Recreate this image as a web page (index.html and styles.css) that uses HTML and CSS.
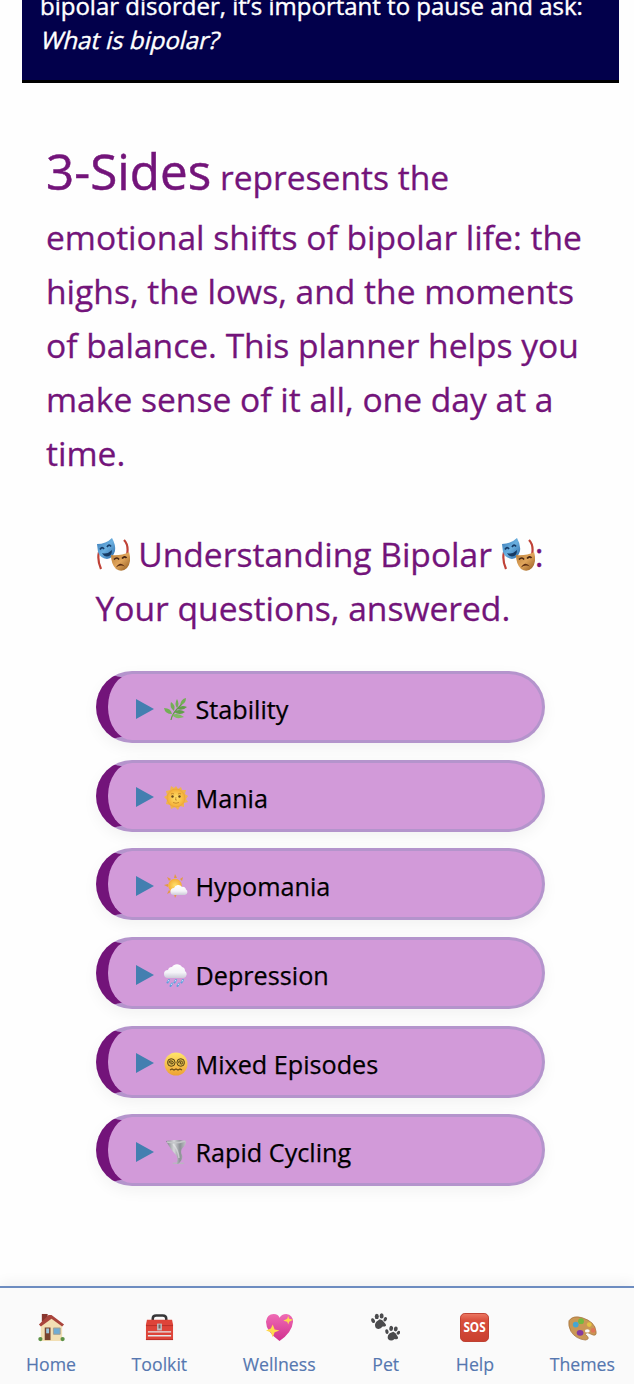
FILE: index.html
```
<!DOCTYPE html>
<html lang="en">
<head>
<meta charset="utf-8">
<title>3-Sides</title>
<link rel="stylesheet" href="styles.css">
</head>
<body>
<svg class="defs" aria-hidden="true">
  <defs>
    <linearGradient id="blue" x1="0" y1="0" x2="1" y2="1"><stop offset="0" stop-color="#3576b4"/><stop offset=".5" stop-color="#6bb0e0"/><stop offset="1" stop-color="#2865a3"/></linearGradient>
    <linearGradient id="gold" x1="0" y1="0" x2="1" y2="1"><stop offset="0" stop-color="#b87b36"/><stop offset=".5" stop-color="#e0a55b"/><stop offset="1" stop-color="#8f571c"/></linearGradient>
    <radialGradient id="sun"><stop offset="0" stop-color="#ffe16b"/><stop offset="1" stop-color="#f4ad35"/></radialGradient>
    <linearGradient id="cloud" x1="0" y1="0" x2="0" y2="1"><stop offset="0" stop-color="#fff"/><stop offset=".6" stop-color="#f4f3f8"/><stop offset="1" stop-color="#cccbd8"/></linearGradient>
    <linearGradient id="face" x1="0" y1="0" x2="0" y2="1"><stop offset="0" stop-color="#ffe56a"/><stop offset="1" stop-color="#eda233"/></linearGradient>
    <linearGradient id="wind" x1="0" y1="0" x2="1" y2="0"><stop offset="0" stop-color="#777b80"/><stop offset=".4" stop-color="#d5d7da"/><stop offset=".7" stop-color="#8c9095"/><stop offset="1" stop-color="#c3c5c9"/></linearGradient>
    <linearGradient id="pink" x1="0" y1="0" x2="0" y2="1"><stop offset="0" stop-color="#ef6bb4"/><stop offset="1" stop-color="#d0308f"/></linearGradient>
    <linearGradient id="red" x1="0" y1="0" x2="0" y2="1"><stop offset="0" stop-color="#ec7862"/><stop offset=".25" stop-color="#d94f3d"/><stop offset="1" stop-color="#c9402f"/></linearGradient>
    <symbol id="masks" viewBox="0 0 34 34">
      <path d="M3 14Q1 22 5 31M28 2Q33 7 31 17" fill="none" stroke="#c04237" stroke-width="2.200"/>
      <path d="M1 6Q10 6 16 0Q20 7 19 13Q17 20 11 21Q4 20 2 14Z" fill="url(#blue)"/>
      <path d="M4 11.500q2-3.500 4-.5M11 9q2-3.500 4-.5" fill="none" stroke="#153b68" stroke-width="1.700"/>
      <path d="M6 15q5 2 10-3q0 6-5 6.500q-3 0-5-3.500" fill="#163a63"/>
      <path d="M15 17Q25 18 33 14Q36 24 31 30Q26 35 20 31Q15 26 15 17Z" fill="url(#gold)"/>
      <path d="M18 21.500q3-3 5 0M26 20.500q3-3 4.500-.5" fill="none" stroke="#442311" stroke-width="1.700"/>
      <path d="M20 29.500q4-7 9-1q-5-2.500-9 1" fill="#5b2d12"/>
    </symbol>
  </defs>
</svg>
<main class="page">
  <section class="intro">
    <p class="intro-text">bipolar disorder, it’s important to pause and ask:<br><em class="question">What is bipolar?</em></p>
  </section>
  <p class="lead"><span class="brand">3-Sides</span> represents the<br>emotional shifts of bipolar life: the<br>highs, the lows, and the moments<br>of balance. This planner helps you<br>make sense of it all, one day at a<br>time.</p>
  <section class="topics">
    <h2 class="topics-title"><svg class="mask"><use href="#masks"/></svg> Understanding Bipolar <svg class="mask"><use href="#masks"/></svg>:<br>Your questions, answered.</h2>
    <div class="topic-list">
      <div class="topic"><i class="arrow"></i><svg class="emoji" viewBox="0 0 24 24"><path d="M7 23Q8 16 18 7" fill="none" stroke="#5f9a48" stroke-width="1.200"/><g fill="#73ae55"><path d="M8 17Q1 17 0 11Q7 11 8 17M10 14Q5 10 7 5Q12 8 10 14M13 11Q10 7 13 2Q16 7 13 11M16 8Q17 2 22 1Q22 7 16 8"/><path d="M13 12Q17 7 23 10Q19 14 13 12M10 15Q15 11 21 15Q16 19 10 15" fill="#629f4a"/><path d="M8 18Q14 15 20 20Q12 23 8 18" fill="#81b962"/></g></svg><span>Stability</span></div>
      <div class="topic"><i class="arrow"></i><svg class="emoji" viewBox="0 0 24 24"><path d="M12 0l2 3 3-2 1 3 4 0-1 4 3 2-2 3 2 3-4 1 0 4-4-1-2 4-3-3-4 2-1-4-4-1 1-4-3-3 3-2-1-4 4-1 1-4 3 2z" fill="#f0b34f"/><circle cx="12" cy="12" r="9" fill="url(#sun)" stroke="#e7a23b" stroke-width=".6"/><path d="M7 8q2-1 3 0M14 8q2-1 3 0M12 11l-.5 3h1.500M9 16.500q3 1.500 6 0" fill="none" stroke="#bd7e25" stroke-width=".8"/><circle cx="8.500" cy="10.500" r="1.200" fill="#65461c"/><circle cx="15.500" cy="10.500" r="1.200" fill="#65461c"/></svg><span>Mania</span></div>
      <div class="topic"><i class="arrow"></i><svg class="emoji" viewBox="0 0 24 24"><path d="M11 0l2 4h-3zM3 3l4 2-2 2zM19 3l-1 4-2-2zM0 11l4-1v3zM3 20l2-4 2 2zM11 24l-1-4h3z" fill="#e39a42"/><circle cx="11" cy="11.500" r="6.800" fill="url(#sun)"/><path d="M10 21a3.500 3.500 0 0 1 0-7 4.500 4.500 0 0 1 8-1 3 3 0 0 1 4 2.500a3 3 0 0 1-1 5.500z" fill="url(#cloud)"/></svg><span>Hypomania</span></div>
      <div class="topic"><i class="arrow"></i><svg class="emoji" viewBox="0 0 24 24"><path d="M4 15a4 4 0 0 1 0-8 4 4 0 0 1 4-3 6 6 0 0 1 10 0 4 4 0 0 1 3 4 4 4 0 0 1-1 7z" fill="url(#cloud)"/><path d="M5 17l-1.500 2.500M12 17l-1.500 2.500M19 17l-1.500 2.500M8 20.500L6.500 23M15 20.500L13.500 23" stroke="#629fdd" stroke-width="2" stroke-linecap="round"/><path d="M5 17l-1 1.500M12 17l-1 1.500M19 17l-1 1.500M8 20.500l-1 1.500M15 20.500l-1 1.500" stroke="#d5ebfb" stroke-width="1"/></svg><span>Depression</span></div>
      <div class="topic"><i class="arrow"></i><svg class="emoji" viewBox="0 0 24 24"><circle cx="12" cy="12" r="11.500" fill="url(#face)"/><g fill="#d6b347" stroke="#5b4518"><circle cx="7.300" cy="10.500" r="3.800"/><circle cx="16.700" cy="10.500" r="3.800"/><path d="M5 11q0-3 3-2 3 2 0 3-2 0-1-2M14.500 11q0-3 3-2 3 2 0 3-2 0-1-2" fill="none"/></g><path d="M6 18l2-1 2 1 2-1 2 1 2-1 2 1" fill="none" stroke="#704d16" stroke-width="1.300"/></svg><span>Mixed Episodes</span></div>
      <div class="topic"><i class="arrow"></i><svg class="emoji" viewBox="0 0 24 24"><ellipse cx="14.500" cy="23.300" rx="6" ry="1" fill="#bcb3c3"/><path d="M2 1Q12-1 22 1Q22 5 18.500 8Q16 11 18 15Q19.500 20 14 24H12Q15 19 12 15Q7 10 5 6Z" fill="url(#wind)"/><path d="M3 2Q12 4 21 1" fill="none" stroke="#c4c6c9" stroke-width="1.500"/><path d="M9 4Q14 9 15 18" fill="none" stroke="#f0f1f2" stroke-width="1.500" opacity=".5"/></svg><span>Rapid Cycling</span></div>
    </div>
  </section>
</main>
<nav class="tabs">
  <a class="tab"><svg class="tab-icon" viewBox="0 0 30 30"><path d="M5 1h6v8H5z" fill="#87352e"/><path d="M4 13L15 4l11 9v16H4z" fill="#f2dfb4"/><path d="M15 2L28 12l-2 2-11-8L4 14l-2-2L12 2z" fill="#a9443c"/><path d="M8 15h6v13H8z" fill="#784330"/><path d="M9.500 16h3v5h-3z" fill="#9dc7dd"/><path d="M17 15.500h7v6.500h-7z" fill="#70acd4" stroke="#a49f91"/><circle cx="3.500" cy="27" r="2.200" fill="#5c9146"/><circle cx="26.500" cy="27" r="2.200" fill="#5c9146"/></svg><span>Home</span></a>
  <a class="tab"><svg class="tab-icon" viewBox="0 0 30 30"><path d="M8 9V6q0-3.500 3.500-3.500h7q3.500 0 3.500 3.500v3" fill="none" stroke="#363638" stroke-width="2.600"/><path d="M2 7h26l1 5v16H1V12z" fill="#de4439"/><path d="M1 13h28M1 27.500h28" stroke="#b7312b"/><path d="M3 19.500h24M3 23.500h24" stroke="#e4e8ea" stroke-width="1.400"/><path d="M12.500 11h5v7h-5z" fill="#c0c1c2"/><path d="M15 12v4" stroke="#706464" stroke-width="2"/></svg><span>Toolkit</span></a>
  <a class="tab"><svg class="tab-icon" viewBox="0 0 30 30"><path d="M15 29Q1 19 1 9Q2 1 9 1Q14 1 15 5Q17 1 22 1Q29 2 29 9Q28 20 15 29Z" fill="url(#pink)"/><path d="M8 12l2 5 5 1-5 2-2 5-2-5-5-2 5-2zM24 3l1 3 4 1-4 2-1 3-1-3-4-1 4-2z" fill="#ffd94e"/></svg><span>Wellness</span></a>
  <a class="tab"><svg class="tab-icon" viewBox="0 0 30 30"><g id="paw" fill="#4b4b4d"><ellipse cx="2.200" cy="8" rx="1.800" ry="2.600" transform="rotate(-25 2 8)"/><ellipse cx="6" cy="3.500" rx="2.100" ry="2.800"/><ellipse cx="11" cy="3" rx="2.100" ry="2.700"/><ellipse cx="15" cy="6.500" rx="1.700" ry="2.300" transform="rotate(30 15 6)"/><path d="M9 6.500Q12 7 14 10Q18 14 12 14Q9 18 5 15.500Q3 12 5.500 9Z"/></g><use href="#paw" transform="translate(16 11.500) rotate(12) scale(.95)"/></svg><span>Pet</span></a>
  <a class="tab"><svg class="tab-icon" viewBox="0 0 30 30"><rect x=".5" y=".5" width="29" height="29" rx="4.500" fill="url(#red)" stroke="#bd3c2e"/><text class="sos" x="15" y="20" text-anchor="middle" textLength="23" lengthAdjust="spacingAndGlyphs">SOS</text></svg><span>Help</span></a>
  <a class="tab"><svg class="tab-icon" viewBox="0 0 30 30"><path d="M1 8Q5 2 15 5Q28 9 29 19Q30 25 24 22Q19 19 18 22Q24 27 18 28Q8 27 3 19Q0 13 1 8Z" fill="#ca9755" stroke="#9f6b36" stroke-width=".7"/><ellipse cx="20" cy="18.500" rx="2.500" ry="1.700" fill="#fafafa"/><circle cx="8" cy="12" r="3" fill="#46a7d2"/><circle cx="13.500" cy="8.500" r="3" fill="#72ba40"/><circle cx="22" cy="12" r="2.500" fill="#e3c346"/><circle cx="26" cy="18" r="2.500" fill="#df7658"/><ellipse cx="12.500" cy="20.500" rx="3.500" ry="3" fill="#853a9f"/></svg><span>Themes</span></a>
</nav>
</body>
</html>
```
FILE: styles.css
```
* { box-sizing: border-box; }
body {
  margin: 0;
  height: 1384px;
  overflow: hidden;
  display: flex;
  flex-direction: column;
  background: #fefefe;
  font-family: "Open Sans", "Noto Sans", sans-serif;
}
.defs { position: absolute; width: 0; height: 0; }
.page { flex: 1; min-height: 0; }
.intro {
  width: 597px;
  height: 83px;
  margin-left: 22px;
  overflow: hidden;
  display: flex;
  align-items: flex-end;
  padding: 0 18px 23px;
  background: #02004b;
  border-bottom: 3px solid #000;
  color: #fff;
}
.intro-text { margin: 0; font-size: 24px; line-height: 34px; white-space: nowrap; -webkit-text-stroke: .4px #fff; }
.question { display: inline-block; margin-left: 2px; font-style: normal; transform: skewX(-14deg); }
.lead {
  margin: 49px 0 0 46px;
  font-size: 33.600px;
  line-height: 54px;
  color: #73147a;
  white-space: nowrap;
  -webkit-text-stroke: .3px #73147a;
}
.brand { font-size: 49.400px; line-height: 78px; -webkit-text-stroke: .5px #73147a; }
.topics { width: 449px; margin: 47px 0 0 96px; }
.topics-title {
  margin: 0 0 0 -.5px;
  font-size: 33.600px;
  font-weight: 400;
  line-height: 54px;
  color: #73147a;
  white-space: nowrap;
  -webkit-text-stroke: .3px #73147a;
}
.mask { width: 34px; height: 34px; vertical-align: -5px; }
.topic-list { display: grid; gap: 16.700px; margin-top: 36px; }
.topic {
  display: flex;
  align-items: center;
  height: 72px;
  padding: 4px 0 0 28px;
  border: 3px solid #b494cc;
  border-left: 12px solid #73147a;
  border-radius: 36px;
  background: #d29ad9;
  box-shadow: 0 5px 15px rgba(0, 0, 0, .05);
  color: #000;
  font-size: 25.200px;
  -webkit-text-stroke: .25px #000;
}
.arrow {
  border-left: 18px solid #437fb0;
  border-top: 10.500px solid transparent;
  border-bottom: 10.500px solid transparent;
  margin-top: -1px;
}
.emoji { width: 24px; height: 24px; margin: 0 8px 0 9.500px; }
.tabs {
  flex: none;
  display: flex;
  justify-content: space-between;
  height: 98px;
  padding: 25px 19px 0 26px;
  border-top: 2px solid #6d8cc0;
  background: #fafafa;
  box-shadow: 0 -3px 13px rgba(0, 0, 0, .06);
}
.tab { display: flex; flex-direction: column; align-items: center; gap: 10px; color: #5577b0; font-size: 17.700px; line-height: 24px; -webkit-text-stroke: .15px #5577b0; }
.tab-icon { width: 29px; height: 29px; }
.sos { font: bold 14px "Open Sans", sans-serif; fill: #fff; stroke: none; }
```
